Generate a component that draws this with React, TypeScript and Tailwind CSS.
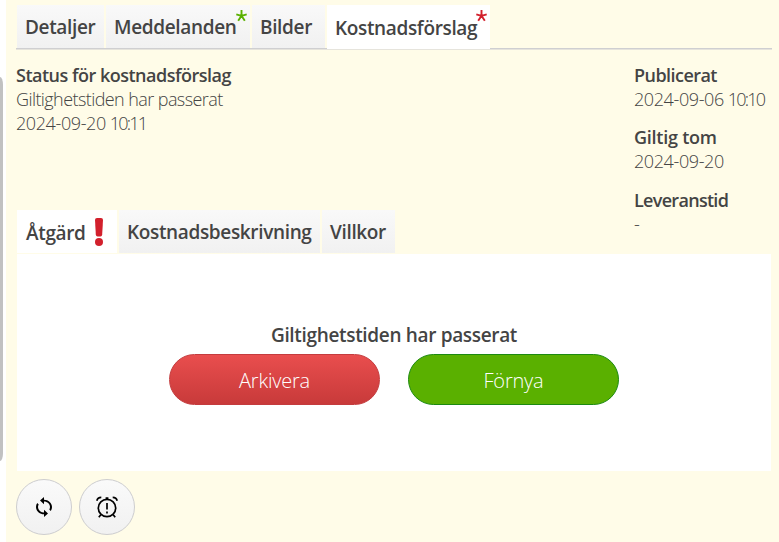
import React from "react";
import { MdSync } from "react-icons/md";

const mainTabs = [
  { label: "Detaljer", width: "w-[87px]" },
  { label: "Meddelanden", width: "w-[144px]", star: "text-[#5ab000]" },
  { label: "Bilder", width: "w-[73px]" },
  { label: "Kostnadsförslag", width: "w-[163px]", star: "text-[#d2202c]", active: true },
];

const subTabs = [
  { label: "Åtgärd", width: "w-[100px]", alert: true, active: true },
  { label: "Kostnadsbeskrivning", width: "w-[201px]" },
  { label: "Villkor", width: "w-[73px]" },
];

const dates = [
  { label: "Publicerat", date: "2024-09-06", time: "10:10", tracking: "tracking-[-0.55px]" },
  { label: "Giltig tom", date: "2024-09-20", tracking: "tracking-[-0.25px]" },
  { label: "Leveranstid", date: "-", tracking: "tracking-[-0.7px]" },
];

const Star = ({ className }: { className: string }) => (
  <svg
    className={`absolute right-[3.5px] top-[5px] h-[12px] w-[11px] ${className}`}
    viewBox="0 0 11 12"
    fill="none"
    stroke="currentColor"
    strokeWidth="1.9"
  >
    <path d="M5.5 5.8V0M5.5 5.8L.3 4.3M5.5 5.8l5.2-1.5M5.5 5.8L2.2 10.8M5.5 5.8l3.3 5" />
  </svg>
);

const DateTime = ({ date, time }: { date: string; time?: string }) => (
  <>
    <span className="tracking-[-0.4px]">{date}</span>
    {time && <span className="tracking-[-1.8px]">&nbsp;&thinsp;{time}</span>}
  </>
);

const App: React.FC = () => {
  return (
    <div className="flex h-[542px] w-[779px] overflow-hidden bg-white font-['Open_Sans',sans-serif] text-[#444]">
      {/* Scrollbar */}
      <div className="w-[6px] shrink-0 pt-[77px]">
        <div className="h-[384px] w-[3px] rounded-r-[3px_8px] bg-[#c1c1c1]" />
      </div>

      <div className="flex flex-1 flex-col bg-[#fffce8] pl-[10px] pt-[5px]">
        {/* Main tabs */}
        <div className="flex h-[45px] w-[756px] shrink-0 gap-[2px] bg-[linear-gradient(#cfcfd1_50%,#e6e4dc_50%)] bg-[length:100%_2px] bg-[position:0_43px] bg-no-repeat pl-px">
          {mainTabs.map((tab) => (
            <div
              key={tab.label}
              className={`relative whitespace-nowrap pl-[8px] text-[19px] font-semibold tracking-[-0.35px] ${tab.width} ${
                tab.active
                  ? "h-[44px] bg-white leading-[47px]"
                  : "h-[43px] bg-linear-to-b from-[#f9f9f9] to-[#f1f1f1] leading-[44px]"
              }`}
            >
              {tab.label}
              {tab.star && <Star className={tab.star} />}
            </div>
          ))}
        </div>

        {/* Status */}
        <div className="flex h-[160px] w-[756px] shrink-0 justify-between pt-[13px] text-[18px] leading-[24px]">
          <div>
            <h2 className="font-semibold tracking-[-0.5px]">Status för kostnadsförslag</h2>
            <p className="font-light tracking-[-0.58px]">Giltighetstiden har passerat</p>
            <p className="font-light">
              <DateTime date="2024-09-20" time="10:11" />
            </p>
          </div>
          <dl className="w-[138px] whitespace-nowrap">
            {dates.map((d) => (
              <div key={d.label} className="h-[62.4px]">
                <dt className={`font-semibold ${d.tracking}`}>{d.label}</dt>
                <dd className="font-light">
                  <DateTime date={d.date} time={d.time} />
                </dd>
              </div>
            ))}
          </dl>
        </div>

        {/* Sub tabs */}
        <div className="flex h-[44px] shrink-0 gap-[2px] pl-px">
          {subTabs.map((tab) => (
            <div
              key={tab.label}
              className={`flex h-[43px] gap-[9px] whitespace-nowrap text-[19px] font-semibold tracking-[-0.35px] ${tab.width} ${
                tab.active
                  ? "bg-white pl-[9px] leading-[47px]"
                  : "bg-linear-to-b from-[#f9f9f9] to-[#f1f1f1] pl-[8px] leading-[44px]"
              }`}
            >
              <span>{tab.label}</span>
              {tab.alert && (
                <svg className="mt-[8px] h-[28px] w-[8px]" viewBox="0 0 8 28" fill="#d2202c">
                  <path d="M0 2Q0 0 2 0H6Q8 0 8 2L7.2 16.5Q7 18.5 5.5 18.5H2.5Q1 18.5.8 16.5Z" />
                  <circle cx="4" cy="24" r="4" />
                </svg>
              )}
            </div>
          ))}
        </div>

        <section className="ml-px h-[217px] w-[754px] shrink-0 bg-white pt-[68px]">
          <h3 className="text-center text-[19px] font-semibold leading-[26px] tracking-[-0.33px]">
            Giltighetstiden har passerat
          </h3>
          <div className="mt-[6px] flex justify-center gap-[28px] text-[20px] font-light tracking-[-0.2px] text-white">
            <button className="h-[51px] w-[211px] rounded-[26px] border border-[#c43c3e] bg-linear-to-b from-[#e94e4e] to-[#c83a3a] pt-[2px]">
              Arkivera
            </button>
            <button className="h-[51px] w-[211px] rounded-[26px] border border-[#1c8a10] bg-[#5ab000] pt-[2px]">
              Förnya
            </button>
          </div>
        </section>

        {/* Round actions */}
        <div className="mt-[8px] flex gap-[7px] text-black">
          <button className="flex h-[56px] w-[56px] items-center justify-center rounded-full border border-[#cdcdcf] bg-linear-to-b from-[#fafafa] to-[#f1f1f1]">
            <MdSync className="h-[22px] w-[24px]" preserveAspectRatio="none" />
          </button>
          <button className="flex h-[56px] w-[56px] items-center justify-center rounded-full border border-[#cdcdcf] bg-linear-to-b from-[#fafafa] to-[#f1f1f1]">
            <svg className="h-[22px] w-[22px]" viewBox="0 0 22 22" fill="none" stroke="currentColor" strokeWidth="1.7">
              <circle cx="11" cy="12" r="8.7" />
              <path d="M11 7v6.5M11 15.5v2M9.6 2.1h2.8M4.8 18.8l-2 2.4M17.2 18.8l2 2.4M.8 4.7C1.3 2.5 3 1.3 5.3 1.3M21.2 4.7c-.5-2.2-2.2-3.4-4.5-3.4" />
            </svg>
          </button>
        </div>
      </div>
    </div>
  );
};

export default App;
